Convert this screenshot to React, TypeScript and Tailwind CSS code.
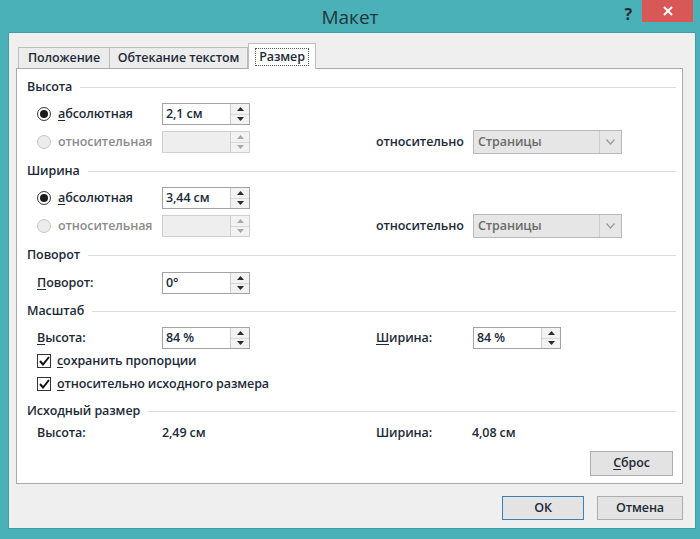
import React from "react";

function Arrow({ up, dim }: { up?: boolean; dim?: boolean }) {
  return (
    <div className="flex flex-1 items-center justify-center bg-[#f2f2f2]">
      <svg width="7" height="4" viewBox="0 0 7 4">
        <path d={up ? "M0 4 L3.5 0 L7 4 Z" : "M0 0 L3.5 4 L7 0 Z"} fill={dim ? "#a8a8a8" : "#2a2a2a"} />
      </svg>
    </div>
  );
}

function Spin({ value, disabled }: { value?: string; disabled?: boolean }) {
  return (
    <div
      className={`flex h-[22px] w-[88px] border ${
        disabled ? "border-[#cfcfcf] bg-[#eeeeee]" : "border-[#a3a3a3] bg-white"
      }`}
    >
      <div className="flex-1 pl-[3px] leading-[20px] text-[#1a2a3a]">{value}</div>
      <div className="flex w-[19px] flex-col gap-px border-l border-[#cdcdcd] bg-[#d8d8d8]">
        <Arrow up dim={disabled} />
        <Arrow dim={disabled} />
      </div>
    </div>
  );
}

function Select() {
  return (
    <div className="flex h-[24px] w-[149px] border border-[#b9b9b9] bg-[#e6e6e6]">
      <div className="flex-1 pl-[4px] leading-[22px] text-[#6b6b6b]">Страницы</div>
      <div className="flex w-[22px] items-center justify-center border-l border-[#cccccc]">
        <svg width="9" height="6" viewBox="0 0 9 6">
          <path d="M0.5 0.5 L4.5 5 L8.5 0.5" fill="none" stroke="#9a9a9a" strokeWidth="1.2" />
        </svg>
      </div>
    </div>
  );
}

function Radio({ checked, disabled }: { checked?: boolean; disabled?: boolean }) {
  return (
    <div
      className={`mr-[7px] flex h-[14px] w-[14px] items-center justify-center rounded-full border ${
        disabled ? "border-[#c6c6c6] bg-[#ececec]" : "border-[#333333] bg-white"
      }`}
    >
      {checked && <div className="h-[8px] w-[8px] rounded-full bg-[#1c1c1c]" />}
    </div>
  );
}

function Check() {
  return (
    <div className="mr-[6px] flex h-[14px] w-[14px] items-center justify-center border border-[#333333] bg-white">
      <svg width="11" height="10" viewBox="0 0 11 10">
        <path d="M1 5 L4 8.5 L10 1" fill="none" stroke="#111" strokeWidth="2" />
      </svg>
    </div>
  );
}

function Heading({ text, className }: { text: string; className?: string }) {
  return (
    <div className={`flex h-[16px] items-center pl-[10px] pr-[6px] ${className ?? ""}`}>
      <span className="leading-[16px]">{text}</span>
      <div className="ml-[8px] h-px flex-1 bg-[#d9dde0]" />
    </div>
  );
}

function U({ c }: { c: string }) {
  return <span className="underline underline-offset-2">{c}</span>;
}

function SizeGroup({ value }: { value: string }) {
  return (
    <>
      <div className="flex h-[22px] items-center pl-[20px] mt-[8px]">
        <div className="flex w-[125px] items-center">
          <Radio checked />
          <span>
            <U c="а" />
            бсолютная
          </span>
        </div>
        <Spin value={value} />
      </div>
      <div className="flex h-[22px] items-center pl-[20px] mt-[6px]">
        <div className="flex w-[125px] items-center text-[#8c8c8c]">
          <Radio disabled />
          <span>относительная</span>
        </div>
        <Spin disabled />
        <div className="w-[126px]" />
        <div className="w-[97px]">относительно</div>
        <Select />
      </div>
    </>
  );
}

function Button({ children, primary, className }: { children: React.ReactNode; primary?: boolean; className?: string }) {
  return (
    <div
      className={`flex items-center justify-center border bg-[#e3e3e3] ${
        primary ? "border-[#3d80b6]" : "border-[#adadad]"
      } ${className ?? ""}`}
    >
      {children}
    </div>
  );
}

export default function App() {
  return (
    <div className="flex h-[539px] w-[700px] flex-col bg-[#4bb1b9] font-['Open_Sans','Noto_Sans',sans-serif] font-semibold text-[12.5px] tracking-[-0.1px] text-[#1d2a38]">
      {/* title bar */}
      <div className="grid h-[33px] grid-cols-[1fr_auto_1fr]">
        <div />
        <div className="pt-[3px] text-[19px] font-normal tracking-normal text-[#213739]">Макет</div>
        <div className="flex justify-end pr-[7px]">
          <div className="mr-[10px] pt-[2px] text-[16px] font-bold text-[#1e2e30]">?</div>
          <div className="flex h-[22px] w-[51px] items-center justify-center bg-[#d85757]">
            <svg width="10" height="10" viewBox="0 0 10 10">
              <path d="M1 1 L9 9 M9 1 L1 9" stroke="white" strokeWidth="2" />
            </svg>
          </div>
        </div>
      </div>

      {/* dialog body */}
      <div className="mb-[11px] ml-[9px] mr-[5px] flex flex-1 flex-col bg-[#efefef] pl-[7px] pr-[12px] shadow-[0_0_0_1px_#3e9ea5]">
        {/* tabs */}
        <div className="flex h-[35px] items-end pl-[2px]">
          <div className="flex h-[22px] w-[92px] items-center justify-center border border-b-0 border-[#bdbdbd] bg-[#ececec] -mb-px">
            Положение
          </div>
          <div className="flex h-[22px] w-[138px] items-center justify-center border border-b-0 border-l-0 border-[#bdbdbd] bg-[#ececec] -mb-px">
            Обтекание текстом
          </div>
          <div className="relative z-10 flex h-[26px] w-[68px] items-center justify-center border border-b-0 border-[#bdbdbd] bg-white -mb-px">
            <span className="border border-dotted border-[#555] px-[3px] leading-[16px]">Размер</span>
          </div>
        </div>

        {/* panel */}
        <div className="flex h-[416px] flex-col border border-[#a9a9a9] bg-white pt-[10px]">
          <Heading text="Высота" />
          <SizeGroup value="2,1 см" />

          <Heading text="Ширина" className="mt-[10px]" />
          <SizeGroup value="3,44 см" />

          <Heading text="Поворот" className="mt-[10px]" />
          <div className="flex h-[22px] items-center pl-[20px] mt-[9px]">
            <div className="w-[125px]">
              <U c="П" />
              оворот:
            </div>
            <Spin value="0°" />
          </div>

          <Heading text="Масштаб" className="mt-[9px]" />
          <div className="flex h-[22px] items-center pl-[20px] mt-[8px]">
            <div className="w-[125px]">
              <U c="В" />
              ысота:
            </div>
            <Spin value="84 %" />
            <div className="w-[126px]" />
            <div className="w-[97px]">
              <U c="Ш" />
              ирина:
            </div>
            <Spin value="84 %" />
          </div>
          <div className="flex h-[18px] items-center pl-[20px] mt-[3px]">
            <Check />
            <span>
              <U c="с" />
              охранить пропорции
            </span>
          </div>
          <div className="flex h-[18px] items-center pl-[20px] mt-[5px]">
            <Check />
            <span>
              <U c="о" />
              тносительно исходного размера
            </span>
          </div>

          <Heading text="Исходный размер" className="mt-[10px]" />
          <div className="flex h-[16px] items-center pl-[20px] mt-[6px]">
            <div className="w-[125px]">Высота:</div>
            <div className="w-[88px]">2,49 см</div>
            <div className="w-[126px]" />
            <div className="w-[96px]">Ширина:</div>
            <div>4,08 см</div>
          </div>
          <div className="mt-[10px] flex justify-end pr-[9px]">
            <Button className="h-[25px] w-[83px]">
              <span>
                <U c="С" />
                брос
              </span>
            </Button>
          </div>
        </div>

        {/* footer */}
        <div className="mt-[12px] flex justify-end gap-[13px]">
          <Button primary className="h-[24px] w-[82px]">
            ОК
          </Button>
          <Button className="h-[24px] w-[86px]">Отмена</Button>
        </div>
      </div>
    </div>
  );
}
